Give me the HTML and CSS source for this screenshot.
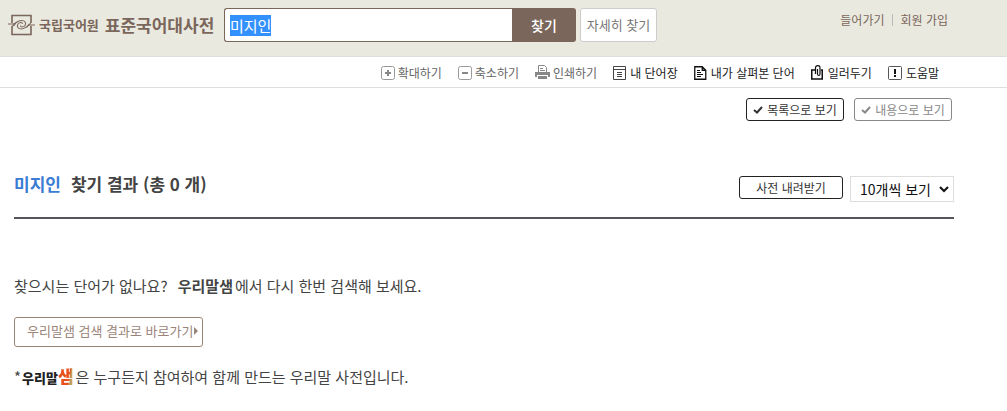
FILE: index.html
```html
<!DOCTYPE html>
<html lang="ko">
<head>
<meta charset="utf-8">
<title>표준국어대사전</title>
<link rel="stylesheet" href="styles.css">
</head>
<body>
<header class="header">
  <a class="logo" href="#">
    <svg class="logo-mark" width="27" height="22" viewBox="0 0 27 22" fill="none" stroke="currentColor">
      <path stroke-width="1.600" d="M4 9V1.500H23V9M4 12V20.500H23V12"/>
      <path stroke-width="1.100" d="M0 10H5C8 10 9 6.500 13.500 6.500C17 6.500 18.500 9 17 11.500C15.500 13.500 12.500 13.500 12.500 11.500M27 11H22C19 11 18 15 13.500 15C10 15 8.500 12.500 10 10C11.500 8 14.500 8 14.500 10M4 12C7 12 7 9.500 8.500 8M23 9.500C20 9.500 20 12 18.500 13.500"/>
    </svg>
    <span class="logo-org">국립국어원</span>
    <span class="logo-name">표준국어대사전</span>
  </a>
  <form class="search" onsubmit="return false">
    <input class="search-input" id="query" type="text" value="미지인" aria-label="검색어">
    <button class="search-button" type="submit">찾기</button>
    <button class="detail-button" type="button">자세히 찾기</button>
  </form>
  <nav class="account">
    <a href="#">들어가기</a>
    <a href="#">회원 가입</a>
  </nav>
</header>
<nav class="tools">
  <button class="tool muted" type="button">
    <svg width="14" height="14" viewBox="0 0 14 14" fill="none" stroke="#999"><rect x=".5" y=".5" width="13" height="13" rx="2"/><path stroke="#888" stroke-width="2" d="M4 7h6M7 4v6"/></svg>확대하기</button>
  <button class="tool muted" type="button">
    <svg width="14" height="14" viewBox="0 0 14 14" fill="none" stroke="#999"><rect x=".5" y=".5" width="13" height="13" rx="2"/><path stroke="#888" stroke-width="2" d="M4 7h6"/></svg>축소하기</button>
  <button class="tool muted" type="button">
    <svg width="15" height="15" viewBox="0 0 15 15" fill="none" stroke="#888"><path d="M3.500 7V.5h6l2 2V7M5 3.500h3M5 5.500h5"/><path fill="#888" stroke="none" d="M0 7h15v5h-2v-2H2v2H0zM3 11h9v3H3z"/></svg>인쇄하기</button>
  <a class="tool" href="#">
    <svg width="13" height="14" viewBox="0 0 13 14" fill="none" stroke="#444"><path d="M.5.5h12v13H.5zM.5 3.500h12M4 6.500h5M4 8.500h5M4 10.500h5"/></svg>내 단어장</a>
  <a class="tool" href="#">
    <svg width="13" height="14" viewBox="0 0 13 14" fill="none" stroke="#111"><path stroke-width="1.300" d="M.75.75h7.500l3.500 3.500v9H.75zM8.250 1v3.250H12"/><path d="M3 4.500h3M3 6.500h4M3 8.500h6M3 10.500h4"/></svg>내가 살펴본 단어</a>
  <a class="tool" href="#">
    <svg width="13" height="15" viewBox="0 0 13 15" fill="none" stroke="#111"><path stroke-width="1.500" d="M4 5H.75v9h10.500V5H10"/><path stroke-width="1.200" d="M4.500 9V3q0-2.300 2.300-2.300T9 3v6q0 1.500-1.200 1.500T6.500 9V4"/></svg>일러두기</a>
  <a class="tool" href="#">
    <svg width="14" height="14" viewBox="0 0 14 14" fill="none" stroke="#555"><rect x=".5" y=".5" width="13" height="13" rx="1"/><path stroke="#111" stroke-width="2" d="M7 3v5M7 9v2"/></svg>도움말</a>
</nav>
<main class="main">
  <div class="views">
    <button class="outline-button" type="button"><svg width="10" height="8" viewBox="0 0 10 8" fill="none" stroke="currentColor" stroke-width="2"><path d="M1 4l3 2.500L9 1"/></svg>목록으로 보기</button>
    <button class="outline-button inactive" type="button"><svg width="10" height="8" viewBox="0 0 10 8" fill="none" stroke="currentColor" stroke-width="2"><path d="M1 4l3 2.500L9 1"/></svg>내용으로 보기</button>
  </div>
  <div class="result-head">
    <h1 class="title"><span class="keyword">미지인</span>찾기 결과 (총 0 개)</h1>
    <div class="result-actions">
      <button class="outline-button download" type="button">사전 내려받기</button>
      <span class="select-wrap">
        <select class="page-size" aria-label="페이지당 결과 수"><option>10개씩 보기</option></select>
        <svg class="chevron" width="10" height="7" viewBox="0 0 10 7" fill="none" stroke="#111" stroke-width="2"><path d="M1 1l4 4 4-4"/></svg>
      </span>
    </div>
  </div>
  <p class="message">찾으시는 단어가 없나요? <strong>우리말샘</strong>에서 다시 한번 검색해 보세요.</p>
  <a class="go-link" href="#">우리말샘 검색 결과로 바로가기<svg width="4" height="8" viewBox="0 0 4 8" fill="currentColor"><path d="M0 0l4 4-4 4z"/></svg></a>
  <p class="note">*<span class="brand">우리말<span class="brand-accent">샘</span></span>은 누구든지 참여하여 함께 만드는 우리말 사전입니다.</p>
</main>
<script>
  document.getElementById('query').select();
</script>
</body>
</html>
```
FILE: styles.css
```css
* {
  box-sizing: border-box;
}

body {
  margin: 0;
  background: #fff;
  color: #333;
  font: 12px/18px "Noto Sans CJK KR", sans-serif;
}

a {
  color: inherit;
  text-decoration: none;
}

button,
input,
select {
  margin: 0;
  font: inherit;
}

h1,
p {
  margin: 0;
}

.header {
  display: flex;
  align-items: flex-start;
  height: 57px;
  padding: 8px 59px 0 8px;
  border-bottom: 1px solid #ddd;
  background: #e9e9e0;
}

.logo {
  display: flex;
  align-items: center;
  width: 216px;
  height: 34px;
  color: #7a665a;
  font-weight: 700;
  white-space: nowrap;
}

.logo-mark {
  margin-right: 4px;
}

.logo-org {
  margin-right: 6px;
  font-size: 13px;
}

.logo-name {
  font-size: 17px;
}

.search {
  display: flex;
}

.search-input {
  width: 288px;
  height: 34px;
  padding: 0 5px;
  border: 1px solid #7a665a;
  border-right: 0;
  border-radius: 3px 0 0 3px;
  outline: 0;
  background: #fff;
  color: #333;
  font-size: 15px;
}

.search-input::selection {
  background: #3390ff;
  color: #fff;
}

.search-button {
  width: 64px;
  height: 34px;
  padding: 0;
  border: 0;
  border-radius: 0 3px 3px 0;
  background: #7a665a;
  color: #fff;
  font-size: 14px;
  font-weight: 500;
}

.detail-button {
  width: 77px;
  height: 34px;
  margin-left: 4px;
  padding: 0;
  border: 1px solid #ccc;
  border-radius: 3px;
  background: #fff;
  color: #777;
  font-size: 13px;
}

.account {
  display: flex;
  margin-left: auto;
  padding-top: 3px;
  color: #7a665a;
}

.account a + a {
  position: relative;
  margin-left: 16px;
}

.account a + a::before {
  position: absolute;
  top: 3px;
  left: -8px;
  width: 1px;
  height: 12px;
  background: #bbb;
  content: "";
}

.tools {
  display: flex;
  justify-content: flex-end;
  gap: 16px;
  height: 31px;
  padding: 1px 68px 0 0;
  border-bottom: 1px solid #ddd;
}

.tool {
  display: flex;
  align-items: center;
  gap: 4px;
  padding: 0;
  border: 0;
  background: none;
  color: #222;
}

.tool.muted {
  gap: 3px;
  color: #666;
}

.main {
  padding: 10px 53px 20px 14px;
}

.views {
  display: flex;
  justify-content: flex-end;
  gap: 10px;
  padding-right: 2px;
}

.outline-button {
  display: flex;
  align-items: center;
  justify-content: center;
  gap: 4px;
  width: 98px;
  height: 23px;
  padding: 0;
  border: 1px solid #222;
  border-radius: 3px;
  background: #fff;
  color: #333;
}

.outline-button.inactive {
  border-color: #888;
  color: #888;
}

.outline-button.download {
  width: 104px;
}

.result-head {
  display: flex;
  align-items: flex-start;
  justify-content: space-between;
  height: 68px;
  margin: 30px 0 53px;
  padding-top: 20px;
  border-bottom: 2px solid #54565a;
}

.title {
  color: #444;
  font-size: 17px;
  font-weight: 700;
  line-height: 26px;
}

.keyword {
  margin-right: 10px;
  color: #3b7cd4;
}

.result-actions {
  display: flex;
  gap: 7px;
  padding-top: 5px;
}

.select-wrap {
  position: relative;
}

.page-size {
  width: 104px;
  height: 26px;
  padding: 0 20px 0 9px;
  border: 1px solid #ddd;
  appearance: none;
  background: #fff;
  color: #111;
  font-size: 14px;
}

.chevron {
  position: absolute;
  top: 10px;
  right: 5px;
  pointer-events: none;
}

.message,
.note {
  color: #444;
  font-size: 15px;
  line-height: 28px;
}

.message strong {
  margin: 0 2px 0 6px;
}

.go-link {
  display: inline-flex;
  align-items: center;
  gap: 1px;
  height: 30px;
  margin: 17px 0 15px;
  padding: 0 4px 2px 12px;
  border: 1px solid #9b8579;
  border-radius: 3px;
  color: #9b8579;
  font-size: 13px;
}

.brand {
  margin: 0 2px 0 1px;
  color: #222;
  font-size: 13px;
  font-weight: 900;
}

.brand-accent {
  background: linear-gradient(100deg, #e8501c 65%, #c0a060 75%);
  background-clip: text;
  color: transparent;
  font-size: 17px;
}
```
